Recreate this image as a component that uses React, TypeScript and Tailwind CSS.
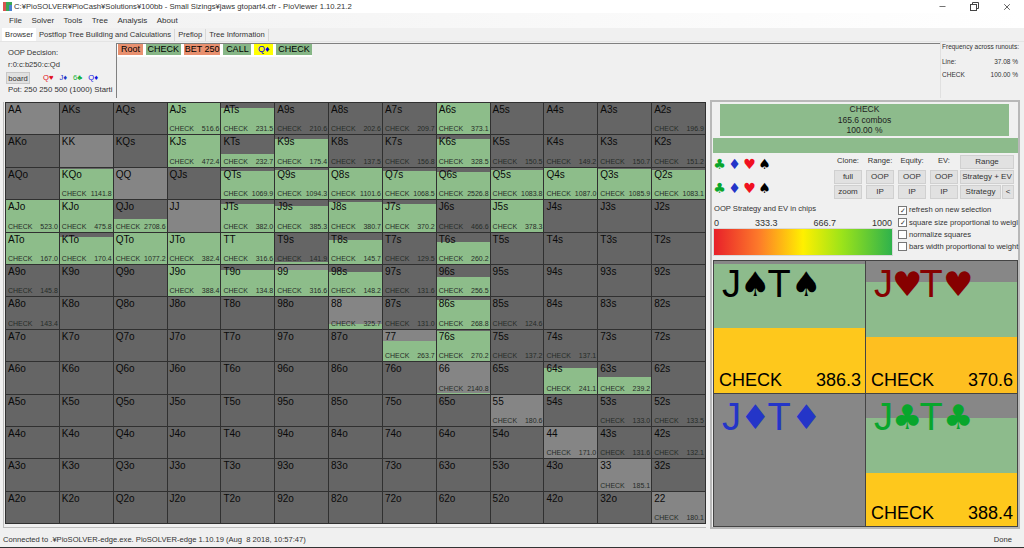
import { X, Minus } from "lucide-react";

const RANKS = "AKQJT98765432".split("");

// hand: [green share of the cell, EV]; a hand without an entry shows no CHECK line
const HANDS: Record<string, [number, string]> = {
  AJs: [1, "516.6"], ATs: [0.85, "231.5"], A9s: [0, "210.6"], A8s: [0, "202.6"], A7s: [0, "209.7"], A6s: [1, "373.1"], A2s: [0, "196.9"],
  KJs: [1, "472.4"], KTs: [0.4, "232.7"], K9s: [0.9, "175.4"], K8s: [0, "137.5"], K7s: [0, "156.8"], K6s: [0.9, "328.5"], K5s: [0, "150.5"], K4s: [0, "149.2"], K3s: [0, "150.7"], K2s: [0, "151.2"],
  KQo: [0.95, "1141.8"], QTs: [0.9, "1069.9"], Q9s: [0.93, "1094.3"], Q8s: [1, "1101.6"], Q7s: [0.9, "1068.5"], Q6s: [0.88, "2526.8"], Q5s: [0.93, "1083.8"], Q4s: [1, "1087.0"], Q3s: [0.95, "1085.9"], Q2s: [0.93, "1083.1"],
  AJo: [1, "523.0"], KJo: [1, "475.8"], QJo: [0.4, "2708.6"], JTs: [0.88, "382.0"], J9s: [0.83, "385.3"], J8s: [0.95, "380.7"], J7s: [0.88, "370.2"], J6s: [0, "466.6"], J5s: [1, "378.3"],
  ATo: [1, "167.0"], KTo: [0.87, "170.4"], QTo: [1, "1077.2"], JTo: [1, "382.4"], TT: [1, "316.6"], T9s: [0.05, "141.9"], T8s: [0.75, "145.7"], T7s: [0, "129.5"], T6s: [0.7, "260.2"],
  A9o: [0, "145.8"], J9o: [1, "388.4"], T9o: [0.85, "134.8"], "99": [0.85, "316.6"], "98s": [0.78, "148.2"], "97s": [0, "131.6"], "96s": [0.62, "256.5"],
  A8o: [0, "143.4"], "88": [0.15, "325.7"], "87s": [0, "131.0"], "86s": [0.9, "268.8"], "85s": [0, "124.6"],
  "77": [0.65, "263.7"], "76s": [0.95, "270.2"], "75s": [0, "137.2"], "74s": [0, "137.1"],
  "66": [0.02, "2140.8"], "64s": [0.8, "241.1"], "63s": [0.52, "239.2"],
  "55": [0, "180.6"], "53s": [0, "133.0"], "52s": [0, "133.5"],
  "44": [0, "171.0"], "43s": [0, "131.6"], "42s": [0, "132.1"],
  "33": [0, "185.1"], "22": [0, "180.1"],
};

const TABS = ["Postflop Tree Building and Calculations", "Preflop", "Tree Information"];
const MENU = ["File", "Solver", "Tools", "Tree", "Analysis", "About"];

const CHIPS = [
  { label: "Root", cls: "bg-[#e8906f] w-[25px]" },
  { label: "CHECK", cls: "bg-[#86b686] w-[35px]" },
  { label: "BET 250", cls: "bg-[#e8906f] w-[37px]" },
  { label: "CALL", cls: "bg-[#86b686] w-[28px]" },
  { label: "Q♦", cls: "bg-[#ffff00] w-[19px] text-[#0000e0]" },
  { label: "CHECK", cls: "bg-[#86b686] w-[36px]" },
];

const OPTIONS = [
  { label: "refresh on new selection", on: true },
  { label: "square size proportional to weigl", on: true },
  { label: "normalize squares", on: false },
  { label: "bars width proportional to weight", on: false },
];

const CARDS = [
  { s: "♠", color: "text-black", gray: 3, green: 64, gold: "bg-[#fec81c]", label: "CHECK", ev: "386.3" },
  { s: "♥", color: "text-[#860000]", gray: 21, green: 55, gold: "bg-[#febf20]", label: "CHECK", ev: "370.6" },
  { s: "♦", color: "text-[#2435c8]", gray: 133, green: 0, gold: "", label: "", ev: "" },
  { s: "♣", color: "text-[#08a62c]", gray: 24, green: 55, gold: "bg-[#fec81c]", label: "CHECK", ev: "388.4" },
];

function WinButton({ children, className = "" }: { children: React.ReactNode; className?: string }) {
  return (
    <button className={`flex h-[14px] items-center justify-center border border-[#d0d0d0] bg-[#e1e1e1] text-[8px] text-[#333] ${className}`}>
      {children}
    </button>
  );
}

function Cell({ row, col }: { row: number; col: number }) {
  const a = RANKS[row];
  const b = RANKS[col];
  const hand = row === col ? a + b : row < col ? a + b + "s" : b + a + "o";
  const data = HANDS[hand];
  return (
    <div className={`relative flex flex-col justify-between overflow-hidden border-b border-r border-[#303030] ${row === col ? "bg-[#858585]" : "bg-[#656565]"}`}>
      {data && data[0] > 0 && <div className="absolute inset-x-0 bottom-0 bg-[#8dbd8a]" style={{ height: `${data[0] * 100}%` }} />}
      <span className="relative pl-[2px] pt-[1px] text-[10px] leading-[12px] text-[#0a0a0a]">{hand}</span>
      {data && (
        <div className="relative flex justify-between pl-[2px] pr-[1px] text-[7px] leading-[10px] text-[#262c28]">
          <span>CHECK</span>
          <span>{data[1]}</span>
        </div>
      )}
    </div>
  );
}

function SuitRow() {
  return (
    <div className="flex gap-[2px] text-[14px] leading-[15px] [font-family:'DejaVu_Sans',sans-serif]">
      <span className="w-[13px] text-center text-[#08a62c]">♣</span>
      <span className="w-[13px] text-center text-[#2435c8]">♦</span>
      <span className="w-[13px] text-center text-[#f01020]">♥</span>
      <span className="w-[13px] text-center text-black">♠</span>
    </div>
  );
}

function Card({ card }: { card: (typeof CARDS)[number] }) {
  return (
    <div className="relative flex flex-col overflow-hidden border-b border-r border-[#444] bg-[#878787]">
      <div style={{ height: card.gray }} />
      <div className="bg-[#8dbb8c]" style={{ height: card.green }} />
      {card.gold && <div className={`flex-1 ${card.gold}`} />}
      <div className={`absolute left-[8px] top-[1px] flex h-[44px] items-center text-[38px] leading-[44px] ${card.color}`}>
        <span className="w-[18px]">J</span>
        <span className="w-[27px] text-center text-[34px] [font-family:'DejaVu_Sans',sans-serif]">{card.s}</span>
        <span className="w-[24px] text-center">T</span>
        <span className="w-[27px] text-center text-[34px] [font-family:'DejaVu_Sans',sans-serif]">{card.s}</span>
      </div>
      {card.label && (
        <div className="absolute bottom-[2px] left-[5px] right-[4px] flex justify-between text-[18px] leading-[22px] text-black">
          <span>{card.label}</span>
          <span>{card.ev}</span>
        </div>
      )}
    </div>
  );
}

export default function App() {
  return (
    <div className="flex h-[548px] w-[1024px] flex-col overflow-hidden bg-[#f0f0f0] text-[7.6px] text-[#333] [font-family:'Liberation_Sans',sans-serif]">
      {/* title bar */}
      <div className="flex h-[13px] items-center bg-white pl-[3px] text-[7.7px]">
        <svg width="9" height="9" viewBox="0 0 9 9" aria-hidden="true" className="mr-[2px] shrink-0">
          <rect width="9" height="9" fill="#3aa655" />
          <rect x="0" y="0" width="3" height="9" fill="#d9534f" />
          <rect x="6" y="3" width="3" height="6" fill="#4a7fd0" />
        </svg>
        <span className="flex-1">C:¥PioSOLVER¥PioCash¥Solutions¥100bb - Small Sizings¥jaws gtopart4.cfr - PioViewer 1.10.21.2</span>
        <div className="flex items-center gap-[23px] pr-[12px] text-[#444]">
          <Minus size={9} />
          <svg width="9" height="9" viewBox="0 0 9 9" fill="none" stroke="currentColor" aria-hidden="true">
            <rect x="0.5" y="2.5" width="6" height="6" />
            <path d="M2.5 2.5v-2h6v6h-2" />
          </svg>
          <X size={10} />
        </div>
      </div>

      {/* menu */}
      <div className="flex h-[15px] items-center gap-[9.5px] bg-gradient-to-r from-[#f1f1f1] to-white pl-[9px] text-[8px]">
        {MENU.map((m) => (
          <span key={m}>{m}</span>
        ))}
      </div>

      {/* tabs */}
      <div className="flex h-[13px] items-end pl-[2px] text-[7.6px]">
        <div className="flex h-[13px] w-[34px] items-center justify-center bg-white">Browser</div>
        {TABS.map((t) => (
          <div key={t} className="flex h-[12px] items-center border-r border-[#d8d8d8] px-[3px]">{t}</div>
        ))}
      </div>

      {/* decision info, breadcrumb, frequencies */}
      <div className="flex h-[57px] border-t border-[#e4e4e4]">
        <div className="flex w-[116px] shrink-0 flex-col overflow-hidden pl-[8px] pt-[5px]">
          <span className="leading-[11px]">OOP Decision:</span>
          <span className="mt-[1px] leading-[11px]">r:0:c:b250:c:Qd</span>
          <div className="mt-[2px] flex items-center gap-[6px]">
            <button className="-ml-[2px] mr-[7px] h-[12px] w-[24px] border border-[#c8c8c8] bg-[#e1e1e1] text-[7.6px]">board</button>
            <span className="text-[#e0101c]">Q♥</span>
            <span className="text-[#2435c8]">J♦</span>
            <span className="text-[#14b03c]">6♣</span>
            <span className="text-[#1010e0]">Q♦</span>
          </div>
          <span className="whitespace-nowrap text-[7.8px] leading-[11px]">Pot: 250 250 500 (1000) Starti</span>
        </div>
        <div className="mt-[1px] flex flex-1 items-start self-stretch border-l border-t border-[#808080]">
          <div className="flex h-[13px] w-[195px] shrink-0 gap-[3px] bg-white pl-[1px] text-[9px] text-black">
            {CHIPS.map((c, i) => (
              <div key={i} className={`flex h-[11px] items-center justify-center ${c.cls}`}>{c.label}</div>
            ))}
          </div>
        </div>
        <div className="flex w-[84px] shrink-0 flex-col border-l border-[#e0e0e0] pl-[1px] pr-[6px] text-[6.5px]">
          <span className="whitespace-nowrap leading-[10px]">Frequency across runouts:</span>
          <div className="mt-[5px] flex justify-between leading-[10px]"><span>Line:</span><span>37.08 %</span></div>
          <div className="mt-[3px] flex justify-between leading-[10px]"><span>CHECK</span><span>100.00 %</span></div>
        </div>
      </div>

      {/* main */}
      <div className="flex h-[431px] gap-[4px] pl-[3px]">
        <div className="mt-[4px] h-[426px] w-[703px] border-b border-l border-[#bdbdbd] pl-[1px]">
          <div className="grid grid-cols-[repeat(13,53.85px)] grid-rows-[repeat(13,32.4px)] border-l border-t border-[#303030]">
            {RANKS.map((_, row) => RANKS.map((_, col) => <Cell key={`${row}-${col}`} row={row} col={col} />))}
          </div>
        </div>

        <div className="mt-[2px] flex h-[429px] w-[310px] flex-col border-2 border-[#b8b8b8] pl-[1px]">
          <div className="ml-[7px] mr-[9px] mt-[2px] flex h-[32px] flex-col items-center justify-center bg-[#8dbb8c] text-[8.5px] leading-[10.5px] text-[#222]">
            <span>CHECK</span>
            <span>165.6 combos</span>
            <span>100.00 %</span>
          </div>
          <div className="mt-[2px] h-[15px] bg-[#8dbb8c]" />

          <div className="mt-[2px] flex h-[44px]">
            <div className="flex w-[121px] flex-col gap-[9px] pt-[2px]">
              <SuitRow />
              <SuitRow />
            </div>
            <div className="flex gap-[4px]">
              {[
                ["Clone:", "full", "zoom"],
                ["Range:", "OOP", "IP"],
                ["Equity:", "OOP", "IP"],
                ["EV:", "OOP", "IP"],
              ].map(([head, top, bottom]) => (
                <div key={head} className="flex w-[28px] flex-col text-center">
                  <span className="h-[15px] whitespace-nowrap pt-[1px] leading-[10px]">{head}</span>
                  <WinButton>{top}</WinButton>
                  <WinButton className="mt-[1px]">{bottom}</WinButton>
                </div>
              ))}
            </div>
            <div className="ml-[2px] flex w-[54px] flex-col gap-[1px]">
              <WinButton>Range</WinButton>
              <WinButton className="whitespace-nowrap">Strategy + EV</WinButton>
              <div className="flex gap-[1px]">
                <WinButton className="flex-1">Strategy</WinButton>
                <WinButton className="w-[12px]">&lt;</WinButton>
              </div>
            </div>
          </div>

          <div className="mt-[5px] flex h-[52px]">
            <div className="flex w-[180px] shrink-0 flex-col">
              <span className="pl-[1px] leading-[10px]">OOP Strategy and EV in chips</span>
              <div className="mt-[4px] flex justify-between px-[1px] text-[9px] leading-[10px]">
                <span>0</span><span>333.3</span><span>666.7</span><span>1000</span>
              </div>
              <div className="h-[28px] border border-[#d8d8d8] bg-[linear-gradient(to_right,#e8202a,#fd7a2a_25%,#fff000_50%,#9be31a_72%,#2fb24c)]" />
            </div>
            <div className="ml-[5px] flex min-w-0 flex-1 flex-col gap-[2.3px] pt-[1px]">
              {OPTIONS.map((o) => (
                <div key={o.label} className="flex h-[10px] items-center gap-[2px] whitespace-nowrap">
                  <span className="flex h-[9px] w-[9px] shrink-0 items-center justify-center border border-[#777] bg-white text-[7px] leading-none">{o.on ? "✓" : ""}</span>
                  <span>{o.label}</span>
                </div>
              ))}
            </div>
          </div>

          <div className="mt-[4px] grid h-[267px] grid-cols-2 grid-rows-2 border-l border-t border-[#444]">
            {CARDS.map((c) => (
              <Card key={c.s} card={c} />
            ))}
          </div>
        </div>
      </div>

      {/* status bar */}
      <div className="flex flex-1 items-center justify-between pl-[3px] pr-[12px] pt-[3px]">
        <span className="whitespace-pre">Connected to .¥PioSOLVER-edge.exe. PioSOLVER-edge 1.10.19 (Aug  8 2018, 10:57:47)</span>
        <span>Done</span>
      </div>
      <div className="h-px shrink-0 bg-[#333]" />
    </div>
  );
}
